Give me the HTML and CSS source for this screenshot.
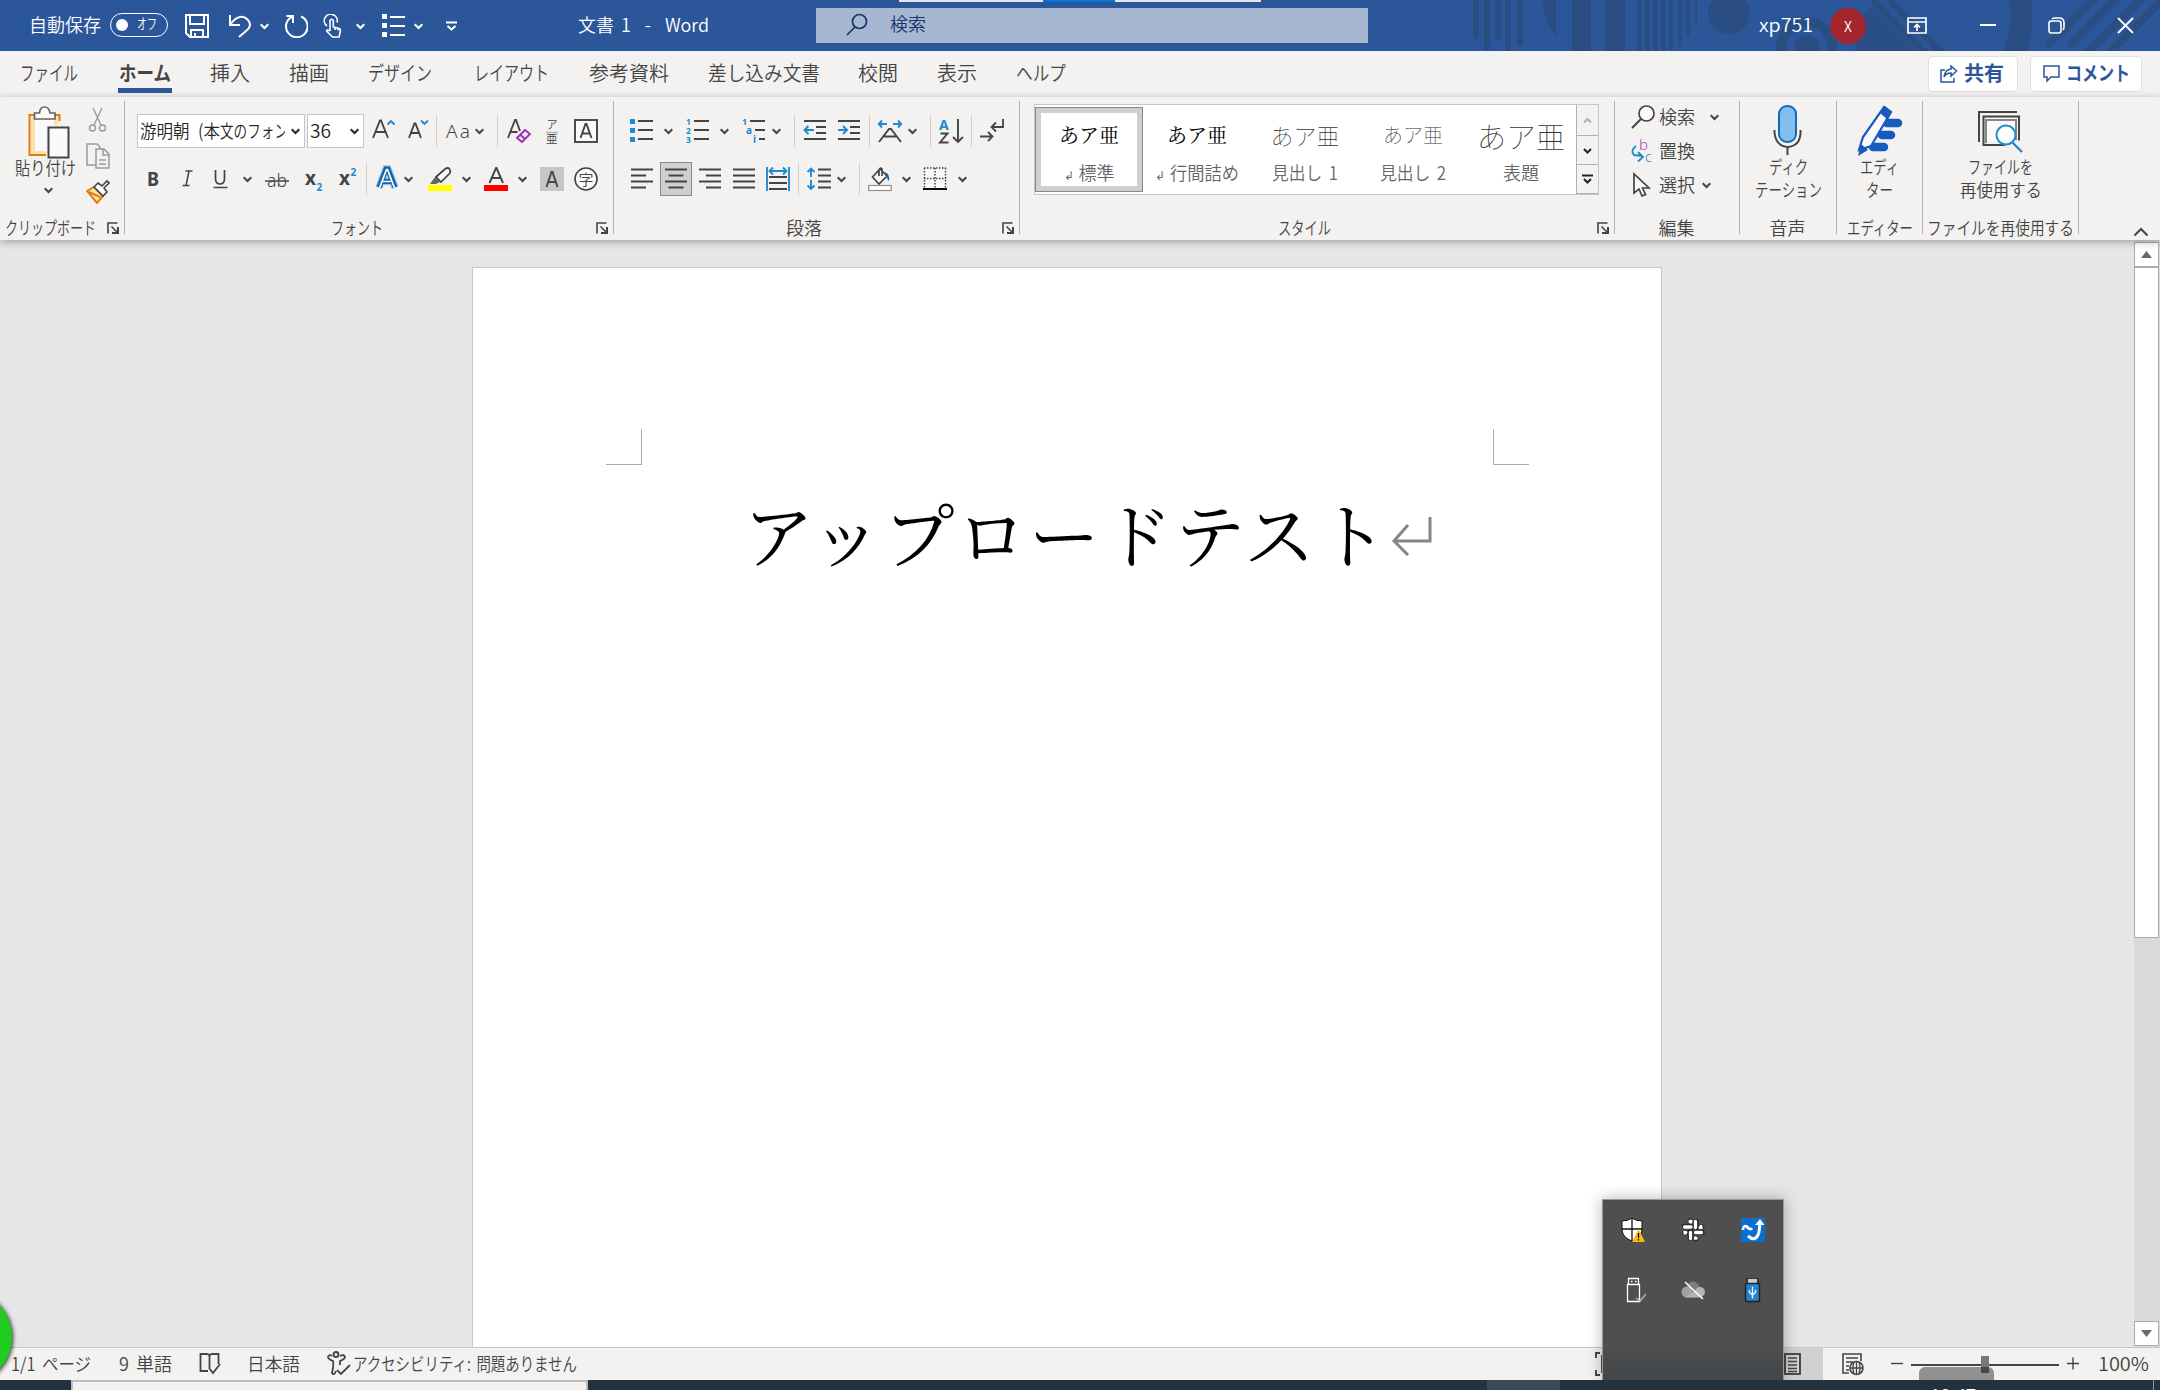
FILE: index.html
```html
<!DOCTYPE html>
<html lang="ja">
<head>
<meta charset="utf-8">
<title>文書 1 - Word</title>
<link rel="stylesheet" href="styles.css">
</head>
<body>
<svg class="defs" aria-hidden="true">
  <symbol id="chev" viewBox="0 0 9 24"><path d="M.7 10.2 4.5 14 8.3 10.2" fill="none" stroke="currentColor" stroke-width="2"/></symbol>
  <symbol id="launch" viewBox="0 0 12 12"><path d="M1 11.5V1H10.500M4.500 4.500 10 10" fill="none" stroke="#444" stroke-width="1.6"/><path d="M11 5v6H5" fill="none" stroke="#444" stroke-width="2"/></symbol>
</svg>

<header class="titlebar">
  <svg class="pattern" viewBox="0 0 720 51" width="720" height="51">
    <g fill="#2a4d82">
      <path d="M22 0h6v39h-6zM33 0h6v39h-6zM44 0h6v50h-6zM55 0h6v39h-6zM65 0h6v51h-6zM77 0h6v46h-6zM103 0h13v37Q103 20 103 0zM132 0h19v51h-19zM166 0h19v51h-19z" clip-path="inset(0 0 0 11px)"/>
      <path d="M198 0h3v51h-3zM205 0h4v51h-4zM213 0h4v51h-4zM221 0h4v51h-4zM229 0h4v50h-4zM238 0h4v46h-4zM246 0h4v37h-4zM255 0h2v24h-2z"/>
      <circle cx="289" cy="13" r="21"/><circle cx="367" cy="48" r="13"/>
      <path d="M432 6 477 51H415V25z" opacity=".8"/>
    </g>
    <circle cx="367" cy="48" r="26" fill="none" stroke="#2a4d82" stroke-width="10"/>
    <g stroke="#2a4d82" stroke-width="7"><path d="M433 0 489 56M449 0 505 56"/></g>
    <path d="M574-20Q590 15 572 60" fill="none" stroke="#2a4d82" stroke-width="22"/>
    <g stroke="#2a4d82" stroke-width="8"><path d="M607 46 655-2M629 46 677-2M645 55 702-2M667 55 724-2"/></g>
  </svg>
  <i class="toptab"></i>
  <span class="t g29" data-w="72">自動保存</span>
  <span class="toggle g9"><i></i><span class="t" data-w="20">オフ</span></span>
  <svg class="g17 w" width="24" height="24"><path d="M1 1h22v22H5L1 19zM5 1v9h14V1M6 23v-7h12v7M10 23v-4" /></svg>
  <svg class="g19 w" width="24" height="24"><path d="M2 1v10h10M2 11C8 2 15 1 19 5c5 5 3 9-1 12l-7 6"/></svg>
  <svg class="g8 wc" width="9" height="24"><use href="#chev"/></svg>
  <svg class="g15 w" width="24" height="24"><path d="M17 2.500A10.800 10.800 0 1 1 8 2.800M2.500 2h6.500v7"/></svg>
  <svg class="g14 w" width="24" height="24"><path d="M5 12A6.500 6.500 0 1 1 15 8.500M8 17V6.500q1.700-2.500 3.300 0V13l6 1.500q1.500.7 1 3l-1.300 5.500h-6.500L4.500 17q0-2 3.500 0M13 13v3M16 14v2.500" stroke-width="1.600"/></svg>
  <svg class="g10 wc" width="9" height="24"><use href="#chev"/></svg>
  <svg class="g16" width="25" height="24" fill="#fff"><path d="M1 0h5v5H1zM1 9h5v5H1zM1 18h5v5H1zM9 2h15v2H9zM9 11h15v2H9zM9 20h15v2H9z"/></svg>
  <svg class="g8 wc" width="9" height="24"><use href="#chev"/></svg>
  <svg class="g23 w" width="11" height="12"><path d="M0 2.500h11M1.500 6 5.500 9.500 9.500 6"/></svg>
  <span class="t g121" data-w="131">文書 1&nbsp; -&nbsp; Word</span>
  <div class="search g107">
    <svg width="22" height="24"><path d="M9 14 1 22" /><circle cx="13.500" cy="8.500" r="7"/></svg>
    <span class="t" data-w="36">検索</span>
  </div>
  <span class="t g391" data-w="54">xp751</span>
  <span class="avatar g17">X</span>
  <svg class="g41 w" width="20" height="18"><path d="M1 1h18v15H1zM1 5h18M10 14V8M7 10.500 10 7.500 13 10.500" stroke-width="1.700"/></svg>
  <svg class="g53 w" width="16" height="18"><path d="M0 8h16"/></svg>
  <svg class="g52 w" width="17" height="18"><rect x="1" y="4" width="12" height="12" rx="2.500" stroke-width="1.600"/><path d="M4 2q1-1 3-1h4q5 0 5 5v4q0 2-1 3" stroke-width="1.600"/></svg>
  <svg class="g52 w" width="17" height="18"><path d="M1 1 16 16M16 1 1 16" stroke-width="1.800"/></svg>
</header>

<nav class="tabs">
  <span class="t g20" data-w="58">ファイル</span>
  <span class="active g40"><span class="t" data-w="52">ホーム</span></span>
  <span class="t g38" data-w="40">挿入</span>
  <span class="t g39" data-w="40">描画</span>
  <span class="t g39" data-w="64">デザイン</span>
  <span class="t g42" data-w="75">レイアウト</span>
  <span class="t g40" data-w="80">参考資料</span>
  <span class="t g39" data-w="112">差し込み文書</span>
  <span class="t g38" data-w="40">校閲</span>
  <span class="t g39" data-w="40">表示</span>
  <span class="t g39" data-w="50">ヘルプ</span>
  <span class="tabbtn share">
    <svg width="18" height="18"><path d="M5 5H1v12h13v-4M11 1l5.500 5L11 11V8Q6 8 4 12 5 4.500 11 4z"/></svg>
    <span class="t" data-w="40">共有</span>
  </span>
  <span class="tabbtn">
    <svg width="18" height="18"><path d="M1 1h15v11H8l-4 4v-4H1z"/></svg>
    <span class="t" data-w="64">コメント</span>
  </span>
</nav>

<section class="ribbon">
  <div class="group clip">
    <div class="clipbody">
      <div class="paste">
        <svg width="42" height="54"><path d="M10 9H1.500v40H18M24 9h7.500v6" fill="none" stroke="#e07b10" stroke-width="2"/><path d="M3 11v37h15V19h12v-8z" fill="#ffdfa8"/><path d="M7 14h19v5h-8v26H7z" fill="#fafafa"/><path d="M6.500 13V7h5Q12 1 16.500 1T22 7h5v6z" fill="#fafafa" stroke="#666" stroke-width="1.700"/><rect x="20.500" y="21.500" width="20" height="30" fill="#fafafa" stroke="#444" stroke-width="2"/></svg>
        <span class="t" data-w="61">貼り付け</span>
        <svg class="ic" width="9" height="24"><use href="#chev"/></svg>
      </div>
      <div class="cliptools">
        <svg width="24" height="26"><g fill="none" stroke="#9a9a9a" stroke-width="1.400"><path d="M7 1l8 17M16 1 8 18"/><circle cx="6.500" cy="21" r="3"/><circle cx="16.500" cy="21" r="3"/></g></svg>
        <svg width="24" height="26"><g fill="#f3f2f1" stroke="#9a9a9a" stroke-width="1.500"><path d="M10 22H1V1h10l3 3v2"/><path d="M10 6h8l5 5v14H10zM17 6v6h6M13 17h7M13 21h7"/></g></svg>
        <svg width="24" height="26"><path d="M1 12l7-4 9 9-6 7z" fill="#ffe2b0" stroke="#e07b10" stroke-width="2"/><path d="M3 13l11 5" stroke="#e07b10" stroke-width="2"/><path d="M8 8l4-4 4 3 5-5 2 2-5 5 3 4-4 4z" fill="#fafafa" stroke="#444" stroke-width="1.600"/></svg>
      </div>
    </div>
    <div class="gl"><span class="t" data-w="91">クリップボード</span><svg width="12" height="12"><use href="#launch"/></svg></div>
  </div>

  <div class="group font">
    <div class="row r1">
      <div class="combo g12 family"><span class="clipname"><span class="t spaced" data-w="80">游明朝 (本</span><span class="t" data-w="68">文のフォン</span></span><svg width="9" height="24"><use href="#chev"/></svg></div>
      <div class="combo g2 size"><span class="t" data-w="21">36</span><svg width="9" height="24"><use href="#chev"/></svg></div>
      <svg class="ic g8" width="24" height="24"><path d="M1 19 8 1.500h1L16 19M3.500 13h10"/><path class="b" d="M15.500 5.500 19 2l3.500 3.500"/></svg>
      <svg class="ic g12" width="24" height="24"><path d="M1 19 6.500 4.500h1L13 19M3 14h8"/><path class="b" d="M13 1.500 16.500 5 20 1.500"/></svg>
      <i class="sep g4"></i>
      <svg class="ic g9" width="24" height="24"><text x="0" y="19" font-size="19" textLength="24">Aa</text></svg>
      <svg class="ic g5" width="9" height="24"><use href="#chev"/></svg>
      <i class="sep g13"></i>
      <svg class="ic g9" width="24" height="24"><path d="M1 19 8 1h1l4 11M3.500 13h7"/><path d="M10 19l8-8 5 4-8 8zM13 15.500l5 4.500" fill="#f6e8fa" stroke="#9a2fae" stroke-width="1.800"/></svg>
      <svg class="ic g9" width="24" height="24"><text x="6.500" y="10" font-size="11">ア</text><path d="M6 13.500h12" stroke="#b0b0b0" stroke-width="1.500"/><text x="6" y="23.500" font-size="11.500">亜</text></svg>
      <svg class="ic g10" width="24" height="24"><rect x="1" y="1" width="22" height="22" fill="#fafafa"/><path d="M6.500 19 11.500 5h1l5 14M8.500 14.500h7"/></svg>
    </div>
    <div class="row r2">
      <svg class="ic g16" width="24" height="24"><text x="6" y="19" font-size="20" font-weight="700" textLength="12" lengthAdjust="spacingAndGlyphs">B</text></svg>
      <svg class="ic g11" width="24" height="24"><path d="M9.500 4h7M6.500 18.500h7M13 4 10 18.500" stroke-width="1.500"/></svg>
      <svg class="ic g8" width="24" height="24"><path d="M7.500 3v8.500q0 5.500 4.500 5.500t4.500-5.500V3M5.500 20.500h14" stroke-width="1.700"/></svg>
      <svg class="ic g11" width="9" height="24"><use href="#chev"/></svg>
      <svg class="ic g13" width="24" height="24"><text x="2" y="20" font-size="18" textLength="20" lengthAdjust="spacingAndGlyphs">ab</text><path d="M0 14h24" stroke-width="1.500"/></svg>
      <svg class="ic g15" width="24" height="24"><text x="1" y="18" font-size="19" font-weight="700">x</text><text class="bt" x="12.500" y="24" font-size="10">2</text></svg>
      <svg class="ic g10" width="24" height="24"><text x="1" y="18" font-size="19" font-weight="700">x</text><text class="bt" x="12.500" y="8.500" font-size="10">2</text></svg>
      <i class="sep g4"></i>
      <svg class="ic g8" width="24" height="26"><path d="M4 21.500 11 3h2l7 18.500M7 15.500h10" stroke="#8fc4ea" stroke-width="7.500"/><path d="M4 21.500 11 3h2l7 18.500M7 15.500h10" stroke="#0f62ad" stroke-width="5"/><path d="M4.500 22 11.500 3.500h1L19.500 22M8 15.500h8" stroke="#fff" stroke-width="1.700"/></svg>
      <svg class="ic g5" width="9" height="24"><use href="#chev"/></svg>
      <svg class="ic g15" width="24" height="24"><path d="M2 17 7 10l5 5-4 2z" fill="#666" stroke="none"/><path d="M8 10 17 2q3-2 4.500 0t.5 4L13 15z" stroke-width="1.700" fill="#fafafa"/><path d="M0 18h24v6H0z" fill="#ff0" stroke="none"/></svg>
      <svg class="ic g10" width="9" height="24"><use href="#chev"/></svg>
      <svg class="ic g13" width="24" height="24"><path d="M5.500 16 12 1h.5L19 16M8 11h9"/><path d="M0 18h24v6H0z" fill="red" stroke="none"/></svg>
      <svg class="ic g10" width="9" height="24"><use href="#chev"/></svg>
      <svg class="ic g13" width="24" height="24"><path d="M0 0h24v24H0z" fill="#c6c6c6" stroke="none"/><path d="M6.500 20 11.500 5h1l5 15M8.500 15h7"/></svg>
      <svg class="ic g10" width="24" height="24"><circle cx="12" cy="12" r="11" fill="#fafafa" stroke-width="1.600"/><text x="4.500" y="17.500" font-size="15">字</text></svg>
    </div>
    <div class="gl lf"><span class="t" data-w="52">フォント</span><svg width="12" height="12"><use href="#launch"/></svg></div>
  </div>

  <div class="group para">
    <div class="row r1">
      <svg class="ic g16" width="24" height="24"><path d="M0 0h5v5H0zM0 9h5v5H0zM0 18h5v5H0z" fill="#1e8bcd" stroke="none"/><path d="M8 2h15M8 11h15M8 20h15"/></svg>
      <svg class="ic g10" width="9" height="24"><use href="#chev"/></svg>
      <svg class="ic g13" width="24" height="24"><text class="bt" x="0" y="6" font-size="8.500">1</text><text class="bt" x="0" y="15" font-size="8.500">2</text><text class="bt" x="0" y="24" font-size="8.500">3</text><path d="M8 2h15M8 11h15M8 20h15"/></svg>
      <svg class="ic g10" width="9" height="24"><use href="#chev"/></svg>
      <svg class="ic g13" width="24" height="24"><text class="bt" x="0" y="6" font-size="9">1</text><text class="bt" x="4" y="15" font-size="10">a</text><text class="bt" x="11" y="24" font-size="10">i</text><path d="M8 2h15M13 11h10M17 20h6"/></svg>
      <svg class="ic g6" width="9" height="24"><use href="#chev"/></svg>
      <i class="sep g13"></i>
      <svg class="ic g8" width="24" height="24"><path d="M1 2h22M13 8h10M13 14h10M1 20h22"/><path class="b" d="M11 11H2M5.500 7 1.500 11l4 4"/></svg>
      <svg class="ic g10" width="24" height="24"><path d="M1 2h22M13 8h10M13 14h10M1 20h22"/><path class="b" d="M1 11h9M6 7l4 4-4 4"/></svg>
      <i class="sep g8"></i>
      <svg class="ic g8" width="24" height="24"><path d="M1 23 11 10h2l10 13M6 17.500h12"/><path class="b" d="M9 5H1M4 1.500.8 5 4 8.500M15 5h8M20 1.500 23.200 5 20 8.500"/></svg>
      <svg class="ic g6" width="9" height="24"><use href="#chev"/></svg>
      <i class="sep g13"></i>
      <svg class="ic g8" width="24" height="25"><text class="bt" x="0" y="11" font-size="14">A</text><path d="M1.500 14.500h7l-7.500 9h8.500M19 0v22M14 18l5 5 5-5"/></svg>
      <i class="sep g8"></i>
      <svg class="ic g8" width="24" height="24"><path d="M23 0v8H12M16 3.500 11.500 8l4.500 4.500M0 17.500h12M8 13l4.500 4.500L8 22" stroke-width="1.800"/></svg>
    </div>
    <div class="row r2">
      <svg class="ic g16" width="24" height="24"><path d="M1 2.500h22M1 8.500h15M1 14.500h22M1 20.500h15"/></svg>
      <span class="pressed g6"><svg class="ic" width="24" height="24"><path d="M1 2.500h22M4.500 8.500h15M1 14.500h22M4.500 20.500h15"/></svg></span>
      <svg class="ic g6" width="24" height="24"><path d="M1 2.500h22M8 8.500h15M1 14.500h22M8 20.500h15"/></svg>
      <svg class="ic g10" width="24" height="24"><path d="M1 2.500h22M1 8.500h22M1 14.500h22M1 20.500h22"/></svg>
      <svg class="ic g10" width="24" height="24"><path d="M3 10h18M3 16h18M3 22h18"/><path class="b" d="M1 0v24M23 0v24M4 4h16M7 .5 3.500 4 7 7.500M17 .5 20.500 4 17 7.500"/></svg>
      <i class="sep g8"></i>
      <svg class="ic g8" width="24" height="24"><path d="M11 2.500h13M11 8.500h13M11 14.500h13M11 20.500h13"/><path class="b" d="M4 10V2M.5 5 4 1.500 7.500 5M4 13v9M.5 18.500 4 22l3.500-3.500"/></svg>
      <svg class="ic g6" width="9" height="24"><use href="#chev"/></svg>
      <i class="sep g13"></i>
      <svg class="ic g8" width="24" height="24"><path d="M4.500 10 12 2l7 7-8 8zM11 9V3q1-3 3-1v7" stroke-width="1.700" fill="#fafafa"/><path d="M17 5q5 2 4 9-2-1-2-5z" fill="#1065b0" stroke="none"/><rect x=".7" y="18.500" width="22.500" height="5" fill="#fff" stroke="#909090" stroke-width="1.200"/></svg>
      <svg class="ic g10" width="9" height="24"><use href="#chev"/></svg>
      <svg class="ic g12" width="24" height="24"><path d="M1 1h22v20H1z" fill="#fafafa" stroke="none"/><path d="M1 1h22M1 11.500h22M1.500 1v20M22.500 1v20M12 1v20" stroke-dasharray="1.500 1.500" stroke-width="1.500"/><path d="M0 22h24" stroke="#000"/></svg>
      <svg class="ic g11" width="9" height="24"><use href="#chev"/></svg>
    </div>
    <div class="gl lp"><span class="t" data-w="36">段落</span><svg width="12" height="12"><use href="#launch"/></svg></div>
  </div>

  <div class="group styles">
    <div class="gallery">
      <div class="style sel"><b class="s20">あア亜</b><span><small>↲</small><span class="t" data-w="36">標準</span></span></div>
      <div class="style"><b class="s20">あア亜</b><span><small>↲</small><span class="t" data-w="69">行間詰め</span></span></div>
      <div class="style"><b class="s23">あア亜</b><span class="t" data-w="66">見出し 1</span></div>
      <div class="style"><b class="s20 light">あア亜</b><span class="t" data-w="66">見出し 2</span></div>
      <div class="style"><b class="s30">あア亜</b><span class="t" data-w="36">表題</span></div>
      <div class="scroller">
        <i><svg width="9" height="9"><path d="M1 6.500 4.500 3 8 6.500" stroke="#b0b0b0"/></svg></i>
        <i><svg width="9" height="9"><path d="M1 3 4.500 6.500 8 3"/></svg></i>
        <i><svg width="11" height="12"><path d="M0 2.500h11M2 6 5.500 9.500 9 6"/></svg></i>
      </div>
    </div>
    <div class="gl ls"><span class="t" data-w="53">スタイル</span><svg width="12" height="12"><use href="#launch"/></svg></div>
  </div>

  <div class="group edit">
    <div class="erow"><svg class="ic" width="24" height="24"><circle cx="15.500" cy="8.500" r="7.500" stroke-width="1.700" fill="#fafafa"/><path d="M10 14 1 23"/></svg><span class="t" data-w="36">検索</span><svg class="ic g15" width="9" height="24"><use href="#chev"/></svg></div>
    <div class="erow"><svg class="ic" width="24" height="24"><text class="pu" x="8" y="11" font-size="15">b</text><text class="bl" x="14" y="23" font-size="14">c</text><path class="b" d="M5 7q-6 5-2 9l8 1M7 13l5 5-5 4.500"/></svg><span class="t" data-w="36">置換</span></div>
    <div class="erow"><svg class="ic" width="24" height="24"><path d="M3 1v19l5-4 3 7 3.500-1.500L11.500 15H18z" stroke-width="1.700" fill="#fafafa"/></svg><span class="t" data-w="36">選択</span><svg class="ic g7" width="9" height="24"><use href="#chev"/></svg></div>
    <div class="gl"><span class="t" data-w="36">編集</span></div>
  </div>

  <div class="group voice">
    <div class="big">
      <svg width="30" height="54"><rect x="6" y="2" width="17" height="36" rx="8" fill="#83beec" stroke="#0f6cbd" stroke-width="2"/><path d="M1.500 26v3Q3 42 14.500 43 27 42 27.500 29v-3M14.500 43v8" fill="none" stroke="#444" stroke-width="2"/></svg>
      <span class="t" data-w="39">ディク</span><span class="t" data-w="67">テーション</span>
    </div>
    <div class="gl"><span class="t" data-w="36">音声</span></div>
  </div>
  <div class="group editor">
    <div class="big">
      <svg width="46" height="54"><path d="M30 19h11M25 31h9M16 43h11" stroke="#185abd" stroke-width="8.500" stroke-linecap="round"/><path d="M2 46 6 33 27 3l7 5-20 34z" fill="#fafafa" stroke="#185abd" stroke-width="2.200"/><path d="M23 9 28 2l7 6-5 7z" fill="#185abd"/><path d="M1 52 4 40l7 6z" fill="#185abd"/></svg>
      <span class="t" data-w="39">エディ</span><span class="t" data-w="27">ター</span>
    </div>
    <div class="gl"><span class="t" data-w="66">エディター</span></div>
  </div>
  <div class="group reuse">
    <div class="big">
      <svg width="46" height="54"><path d="M1 38V8h38M5.500 42V12.500H41v24M5 41h22" fill="none" stroke="#444" stroke-width="2"/><path d="M8 39V16h30v20" fill="none" stroke="#888" stroke-width="2"/><path d="M9 17h28v20H9z" fill="#fafafa"/><circle cx="28" cy="31" r="9.500" fill="#fff" stroke="#1e8bcd" stroke-width="2"/><path d="M34 38l10 10" stroke="#1e8bcd" stroke-width="2.400"/></svg>
      <span class="t" data-w="65">ファイルを</span><span class="t" data-w="82">再使用する</span>
    </div>
    <div class="gl"><span class="t" data-w="147">ファイルを再使用する</span></div>
  </div>
  <svg class="collapse" width="16" height="10"><path d="M1.500 8.500 8 2l6.500 6.500" fill="none" stroke="#444" stroke-width="2"/></svg>
</section>

<main class="work">
  <div class="canvas">
    <article class="page">
      <div class="marks"><i class="ml"></i><i class="mr"></i></div>
      <h1><span>アップロードテスト</span><svg width="42" height="40"><path d="M39 1v24H3M17 9 3 25l14 14" fill="none" stroke="#868686" stroke-width="3"/></svg></h1>
    </article>
  </div>
  <aside class="vscroll">
    <i class="arrow"><svg width="11" height="7"><path d="M5.500 0 11 7H0z" fill="#6a6a6a"/></svg></i>
    <i class="thumb"></i>
    <i class="arrow end"><svg width="11" height="7"><path d="M5.500 7 11 0H0z" fill="#6a6a6a"/></svg></i>
  </aside>
</main>

<footer class="status">
  <span class="t g11" data-w="80">1/1 ページ</span>
  <span class="t g28" data-w="53">9 単語</span>
  <svg class="ic g27" width="22" height="24"><path d="M9 19H1.500V2H8q2 0 2.500 2v12M10.500 4q.5-2 2.500-2h6.500v10M10 16l4 5 7-9" stroke-width="1.800"/></svg>
  <span class="t g26" data-w="53">日本語</span>
  <svg class="ic g27" width="24" height="26"><circle cx="9" cy="3.500" r="2.500"/><path d="M5 5Q2 3 1 6q0 2 5 4 1 3-1 12 2 3 4-2M13 5q4-2 5 1 0 2-5 4v4M10 19l4 4 9-9" stroke-width="1.800"/></svg>
  <span class="t g2" data-w="224">アクセシビリティ: 問題ありません</span>
  <svg class="ic focus" width="22" height="24"><path d="M5 1H1v5M1 18v5h4M7 4h12v16H7zM18 1h3"/></svg>
  <span class="viewbtn"><svg class="ic" width="18" height="24"><rect x="1" y="2" width="15" height="20"/><path d="M4 6h9M4 9.500h9M4 13h9M4 16.500h9M4 19.500h9" stroke-width="1.500"/></svg></span>
  <svg class="ic g19" width="23" height="24"><path d="M7 21H1V2h18v7M4 6h12M4 10h7M4 14h3M4 18h3" stroke-width="1.600"/><circle cx="14.500" cy="16" r="6.500" fill="#f3f2f1" stroke-width="1.600"/><path d="M8 16h13M14.500 10v12M12 10.500q-2 5 0 11M17 10.500q2 5 0 11" stroke-width="1.300"/></svg>
  <svg class="ic g26" width="12" height="24"><path d="M0 11.500h12" stroke-width="1.400"/></svg>
  <div class="slider g8"><i></i></div>
  <svg class="ic g8" width="12" height="24"><path d="M0 11.500h12M6 5.500v12" stroke-width="1.400"/></svg>
  <span class="t g19" data-w="51">100%</span>
</footer>
<footer class="taskbar"><i class="preview"></i><i class="hot"></i><i class="clock">10:47</i><i class="desk"></i></footer>

<i class="bubble"></i>
<i class="tip"></i>
<div class="tray">
  <svg width="26" height="26"><path d="M2 4q6 0 10-3 4 3 10 3v9q-1 8-10 11Q3 21 2 13z" fill="#fff" stroke="#111" stroke-width="1"/><path d="M12 1v23M2 12h20" stroke="#111" stroke-width="1.300"/><path d="M18.500 12 25 25H12z" fill="#fdb913"/><path d="M18.500 16v5M18.500 22v1.500" stroke="#111" stroke-width="1.300"/></svg>
  <svg width="26" height="26">
    <g stroke="#2a2a2a" stroke-width="5.500" stroke-linecap="round"><path d="M10.500 4v.1M10.500 9.500H4.500M16 4.500v6M21.500 10v.1M16 15.500h6M15.800 21.500v.1M10.500 15v6M5 15.500h.1"/></g>
    <g stroke="#fff" stroke-width="3.300" stroke-linecap="round"><path d="M10 4.500h.8v.6M4.500 10H11M15.500 4.500V10.500M21 9.500v.9h-.8M15.500 15.500H21.500M15.500 21v.2h.6M10.500 15.500V21.500M5 16v-.5h.7"/></g>
  </svg>
  <svg width="26" height="26"><path d="M1 1h24v24H1z" fill="#0a6fd0"/><path d="M3 13q0-5 4-3.500 1 3 5.500 2.500" fill="none" stroke="#fff" stroke-width="2.600"/><path d="M8 19q8 7 11-4l1-9" fill="none" stroke="#fff" stroke-width="3"/><path d="M15 8l5-6L24.500 8z" fill="#fff"/></svg>
  <svg width="26" height="26"><path d="M7.500 7.500h12v17h-12zM8.500 1.500h10v6h-10zM11 4.500h1.500M15 4.500h1.500" fill="none" stroke="#fff" stroke-width="1.300"/><path d="M16 21l4 3 6-7" fill="none" stroke="#bbb" stroke-width="1.300"/></svg>
  <svg width="26" height="26"><circle cx="13" cy="11" r="6.500" fill="#7d7d7d"/><circle cx="7" cy="15" r="5.500" fill="#a2a2a2"/><circle cx="20" cy="15" r="5" fill="#b5b5b5"/><path d="M5 20.500 16 13l7 7.500z" fill="#b5b5b5"/><path d="M5 5 23 22" stroke="#fff" stroke-width="1.500"/></svg>
  <svg width="26" height="26"><rect x="6" y="1" width="13" height="8" fill="#333"/><rect x="8" y="2" width="9" height="5" fill="#ccc"/><rect x="5.500" y="6.500" width="14" height="18" rx="1.500" fill="#2583cf" stroke="#222" stroke-width="1.500"/><path d="M12.500 9.500v12M9.500 13v2.500l3 2.500 3-2.500V13" fill="none" stroke="#e6f3ff" stroke-width="1.400"/></svg>
</div>
<script src="fit.js"></script>
</body>
</html>
```
FILE: fit.js
```js
// Condense each UI label to the width its slot reserves (kana are set narrower than kanji).
document.querySelectorAll('.t[data-w]').forEach(function (el) {
  var natural = el.getBoundingClientRect().width;
  var width = Number(el.dataset.w);
  var inner = document.createElement('span');
  inner.textContent = el.textContent;
  el.textContent = '';
  el.appendChild(inner);
  el.style.width = width + 'px';
  inner.style.transform = 'translateY(-1px) scaleX(' + width / natural + ')';
});
```
FILE: styles.css
```css
* { box-sizing: border-box; }
body { margin: 0; width: 2160px; height: 1390px; overflow: hidden; position: relative; display: flex; flex-direction: column; background: #e6e6e6; color: #444; font: 18px/24px "Noto Sans CJK JP", "Noto Sans", sans-serif; font-weight: 350; }
svg { display: block; flex: none; }
i { font-style: normal; display: block; flex: none; }
.defs { position: absolute; width: 0; height: 0; }
.t { display: inline-block; white-space: nowrap; flex: none; word-spacing: 3px; }
.t > span { display: inline-block; transform-origin: 0 50%; }
.spaced { word-spacing: 5px; }

.g2 { margin-left: 2px; } .g4 { margin-left: 4px; } .g5 { margin-left: 5px; } .g6 { margin-left: 6px; } .g7 { margin-left: 7px; }
.g8 { margin-left: 8px; } .g9 { margin-left: 9px; } .g10 { margin-left: 10px; } .g11 { margin-left: 11px; } .g12 { margin-left: 12px; }
.g13 { margin-left: 13px; } .g14 { margin-left: 14px; } .g15 { margin-left: 15px; } .g16 { margin-left: 16px; } .g17 { margin-left: 17px; }
.g19 { margin-left: 19px; } .g20 { margin-left: 20px; } .g23 { margin-left: 23px; } .g26 { margin-left: 26px; } .g27 { margin-left: 27px; }
.g28 { margin-left: 28px; } .g29 { margin-left: 29px; } .g38 { margin-left: 38px; } .g39 { margin-left: 39px; } .g40 { margin-left: 40px; }
.g41 { margin-left: 41px; } .g42 { margin-left: 42px; } .g52 { margin-left: 52px; } .g53 { margin-left: 53px; }
.g107 { margin-left: 107px; } .g121 { margin-left: 121px; } .g391 { margin-left: 391px; }

.titlebar { height: 51px; flex: none; background: #2b579a; color: #fff; display: flex; align-items: center; position: relative; }
.titlebar > * { position: relative; }
.titlebar .pattern { position: absolute; left: 1440px; top: 0; }
.titlebar .toptab { position: absolute; left: 899px; top: 0; width: 362px; height: 2px; background: linear-gradient(90deg, #e6e6e6 144px, #0078d7 144px 216px, #e6e6e6 216px); }
.titlebar .t { margin-top: -2px; }
.w { fill: none; stroke: #fff; stroke-width: 2; }
.wc { color: #fff; }
.toggle { width: 58px; height: 24px; border: 1.500px solid #fff; border-radius: 12px; display: flex; align-items: center; gap: 9px; padding-left: 5px; font-size: 15px; margin-top: -2px; }
.toggle i { width: 12px; height: 12px; border-radius: 50%; background: #fff; }
.search { width: 552px; height: 35px; background: #a6b8d1; color: #16356b; display: flex; align-items: center; padding-left: 30px; gap: 22px; margin-top: -1px; }
.search svg { fill: none; stroke: #16356b; stroke-width: 1.700; }
.avatar { width: 36px; height: 36px; border-radius: 50%; background: #a4262c; display: grid; place-items: center; font-size: 14px; }

.tabs { height: 46px; flex: none; background: #f3f2f1; display: flex; align-items: center; font-size: 20px; }
.active { height: 37px; display: flex; align-items: center; border-bottom: 5px solid #2b579a; padding: 4px 1px 0; font-weight: 700; align-self: flex-start; margin-top: 5px; }
.tabbtn { height: 36px; border: 1px solid #e1dfdd; border-radius: 4px; background: #fff; color: #2b579a; font-weight: 700; display: flex; align-items: center; padding-left: 12px; gap: 5px; width: 112px; margin-left: 12px; }
.tabbtn svg { fill: none; stroke: #2b579a; stroke-width: 1.500; }
.share { width: 90px; margin-left: 862px; gap: 6px; padding-left: 11px; }

.ribbon { height: 143px; flex: none; background: #f3f2f1; display: flex; padding-top: 4px; box-shadow: 0 2px 8px rgba(0,0,0,.3); position: relative; z-index: 1; }
.group { height: 133px; border-right: 1px solid #b3b0ad; display: flex; flex-direction: column; flex: none; }
.clip { width: 125px; } .font { width: 489px; } .para { width: 406px; } .styles { width: 595px; } .edit { width: 125px; }
.voice { width: 97px; } .editor { width: 86px; } .reuse { width: 156px; }
.gl { margin-top: auto; height: 12px; display: flex; align-items: center; justify-content: center; }
.gl svg { margin-left: auto; margin-right: 5px; }
.clip .gl .t { margin-left: 5px; }
.lf .t { margin-left: 206px; } .lp .t { margin-left: 172px; } .ls .t { margin-left: 258px; }
.row { display: flex; height: 34px; align-items: center; }
.r1 { margin-top: 13px; }
.r2 { margin-top: 14px; }
.ic { color: #444; fill: none; stroke: #444; stroke-width: 1.900; overflow: visible; }
.ic text { fill: #444; stroke: none; font-family: "Noto Sans", "Noto Sans CJK JP", sans-serif; }
.ic .b { stroke: #1e8bcd; }
.ic .bt { fill: #1e8bcd; font-weight: 700; }
.ic .bl { fill: #1e8bcd; }
.ic .pu { fill: #b146c2; }
.sep { width: 1px; height: 32px; background: #d0cecc; }
.combo { height: 34px; background: #fff; border: 1px solid #c6c6c6; display: flex; align-items: center; justify-content: space-between; padding: 0 4px 0 2px; color: #262626; }
.family { width: 168px; } .size { width: 57px; }
.clipname { width: 145px; overflow: hidden; display: flex; }
.pressed { width: 32px; height: 34px; border: 1px solid #8a8a8a; background: #d0d0d0; display: grid; place-items: center; }

.clipbody { display: flex; }
.paste { width: 61px; margin-left: 15px; padding-top: 5px; display: flex; flex-direction: column; align-items: center; }
.paste > .t { margin-top: -4px; }
.paste > .ic { margin: -2px 0 0 5px; }
.paste > svg:first-child { margin-left: 7px; }
.cliptools { margin: 6px 0 0 10px; display: grid; gap: 10px; }

.gallery { margin: 3px 0 0 14px; width: 565px; height: 91px; border: 1px solid #c8c6c4; background: #fff; display: flex; }
.style { width: 108px; margin-top: 2px; height: 85px; display: flex; flex-direction: column; align-items: center; color: #666; }
.style b { font-family: "Noto Serif CJK JP", "Noto Sans CJK JP", serif; font-weight: 400; color: #000; height: 36px; margin-top: 10px; line-height: 36px; }
.style > span { height: 24px; margin-top: 8px; display: flex; }
.style small { font-size: 12px; width: 15px; padding-top: 2px; }
.sel { border: 1px solid #888; box-shadow: inset 0 0 0 5px #cfcfcf; }
.sel b { margin-top: 9px; }
.s20 { font-size: 20px; } .s23 { font-size: 23px; } .s30 { font-size: 29.500px; }
.style .s23, .style .s30, .style .light { font-family: "Noto Sans CJK JP", sans-serif; font-weight: 100; color: #333; }
.scroller { width: 22px; margin-left: auto; background: #f3f2f1; border-left: 1px solid #b0b0b0; display: grid; grid-template-rows: 31px 29px 29px; }
.scroller i { display: grid; place-items: center; border-bottom: 1px solid #b0b0b0; }
.scroller svg { fill: none; stroke: #222; stroke-width: 2; }

.erow { display: flex; align-items: center; height: 34px; margin-left: 16px; }
.erow:first-child { margin-top: -1px; }
.erow .t { margin-left: 4px; }
.edit .gl, .voice .gl { padding-right: 1px; }
.big { display: flex; flex-direction: column; align-items: center; padding-top: 3px; }
.big .t { height: 23px; margin-top: -3px; }
.big .t:last-child { margin-top: 0; }
.big svg { height: 54px; }
.collapse { margin: 126px 0 0 54px; }

.work { flex: 1; min-height: 0; display: flex; }
.canvas { flex: 1; padding: 27px 0 0 472px; overflow: hidden; }
.page { width: 1190px; height: 1100px; border: 1px solid #c6c6c6; background: #fff; }
.marks { display: flex; justify-content: space-between; margin: 161px 132px 0 133px; height: 36px; }
.marks i { width: 36px; border: 0 solid #ababab; border-bottom-width: 1px; }
.marks .ml { border-right-width: 1px; } .marks .mr { border-left-width: 1px; }
h1 { margin: 16px 0 0 270px; font: 400 71px/100px "Noto Serif CJK JP", "Noto Sans CJK JP", serif; color: #000; display: flex; align-items: center; white-space: nowrap; letter-spacing: 1.700px; }
h1 span { width: 648px; }
h1 svg { margin-top: 9px; }
.vscroll { width: 26px; background: #dadada; display: flex; flex-direction: column; padding: 2px 1px 0 0; }
.arrow { height: 25px; background: #fff; border: 1px solid #ababab; display: grid; place-items: center; }
.thumb { height: 671px; background: #fff; border: 1px solid #ababab; }
.end { margin-top: auto; margin-bottom: 1px; }

.status { height: 33px; flex: none; background: #f3f2f1; border-top: 1px solid #c6c6c6; display: flex; align-items: center; }
.focus { margin-left: 1018px; }
.viewbtn { background: #d0d0d0; width: 47px; height: 32px; margin-left: 159px; display: grid; align-items: center; padding-left: 8px; }
.slider { width: 148px; height: 17px; display: flex; align-items: center; background: linear-gradient(#444, #444) 0 8px / 148px 2px no-repeat; }
.slider i { width: 8px; height: 17px; background: #777; margin-left: 70px; }
.taskbar { height: 10px; flex: none; background: #22333f; display: flex; overflow: hidden; }
.preview { width: 517px; height: 10px; margin-left: 71px; background: #f2f2f2; border: 2px solid #bdbdbd; border-bottom: 0; }
.hot { width: 73px; height: 10px; margin-left: 899px; background: #3a4b58; }
.clock { color: #fff; font: 18px/22px "Noto Sans", sans-serif; margin: 4px 0 0 370px; width: 223px; }
.desk { width: 1px; height: 10px; background: #8a949b; }

.bubble { position: absolute; left: -82px; top: 1290px; width: 94px; height: 94px; border-radius: 50%; background: #21cc21; box-shadow: 1px 1px 4px rgba(0,0,0,.8); z-index: 2; clip-path: inset(-6px -6px 4px 0); }
.tip { position: absolute; left: 1919px; top: 1367px; width: 75px; height: 13px; border-radius: 6px 6px 0 0; background: rgba(0,0,0,.4); }
.tray { position: absolute; left: 1602px; top: 1199px; width: 182px; height: 181px; border: 1px solid #999; border-bottom: 0; background: linear-gradient(#4f4f4f 145px, #474849 165px, #41484c); display: grid; grid-template-columns: repeat(3, 60px); grid-auto-rows: 60px; place-items: center; box-shadow: 0 0 14px rgba(0,0,0,.3); clip-path: inset(-20px -20px 0 -20px); }
```
